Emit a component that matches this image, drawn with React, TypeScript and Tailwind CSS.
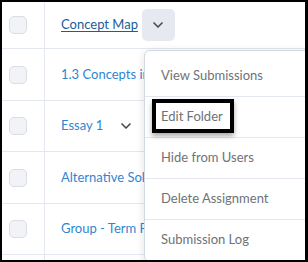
import { ChevronDown } from 'lucide-react';

const rows = [
  { title: 'Concept Map', h: 'h-[47px]', active: true },
  { title: '1.3 Concepts in Practice', h: 'h-[52px]' },
  { title: 'Essay 1', h: 'h-[51px]', chevron: true },
  { title: 'Alternative Solutions', h: 'h-[52px]' },
  { title: 'Group - Term Paper', h: 'h-[51px]' },
  { title: '', h: 'h-[20px]' },
];

const menu = ['View Submissions', 'Edit Folder', 'Hide from Users', 'Delete Assignment', 'Submission Log'];

export default function App() {
  return (
    <div className="relative h-[262px] w-[308px] overflow-hidden border-b-2 border-l-2 border-r-[3px] border-t-2 border-black bg-white font-['Lato',sans-serif]">
      <div className="flex flex-col">
        {rows.map((r, i) => (
          <div key={i} className={`flex shrink-0 border-b border-[#e3e8ef] ${r.h}`}>
            <div className="flex w-[43px] shrink-0 items-center border-r border-[#e3e8ef] pl-[7px]">
              {r.title && (
                <div className="h-[18px] w-[18px] rounded-[5px] border border-[#d9dee6] bg-[#f1f3f6]" />
              )}
            </div>
            {r.active ? (
              <div className="flex items-center whitespace-nowrap pl-[16px] text-[13px]">
                <span className="text-[#1d5c9a] underline underline-offset-2">{r.title}</span>
                <span className="ml-[4px] flex h-[32px] w-[33px] items-center justify-center rounded-[5px] bg-[#e6eaf0]">
                  <ChevronDown size={16} strokeWidth={2.5} className="text-[#494c4e]" />
                </span>
              </div>
            ) : (
              <div className="flex w-[99px] items-center overflow-hidden whitespace-nowrap pl-[16px] text-[13px]">
                <span className="text-[#2f86d0]">{r.title}</span>
                {r.chevron && (
                  <span className="ml-[13px] flex h-[20px] w-[20px] items-center justify-center">
                    <ChevronDown size={16} strokeWidth={2.5} className="text-[#494c4e]" />
                  </span>
                )}
              </div>
            )}
          </div>
        ))}
      </div>

      <div className="absolute left-[142px] top-[48px] w-[190px] rounded-[6px] border border-[#d3d9e1] bg-white pt-[5px] shadow-[0_2px_10px_rgba(0,0,0,0.12)]">
        {menu.map((m, i) => (
          <div
            key={m}
            className="relative flex h-[41px] items-center border-b border-[#e3e8ef] pl-[16px] text-[13px] text-[#6e7376]"
          >
            {i === 1 && (
              <div className="absolute left-[7px] top-[2px] h-[34px] w-[82px] border-[4px] border-black shadow-[0_3px_5px_rgba(0,0,0,0.35)]" />
            )}
            <span className="relative">{m}</span>
          </div>
        ))}
      </div>
    </div>
  );
}
